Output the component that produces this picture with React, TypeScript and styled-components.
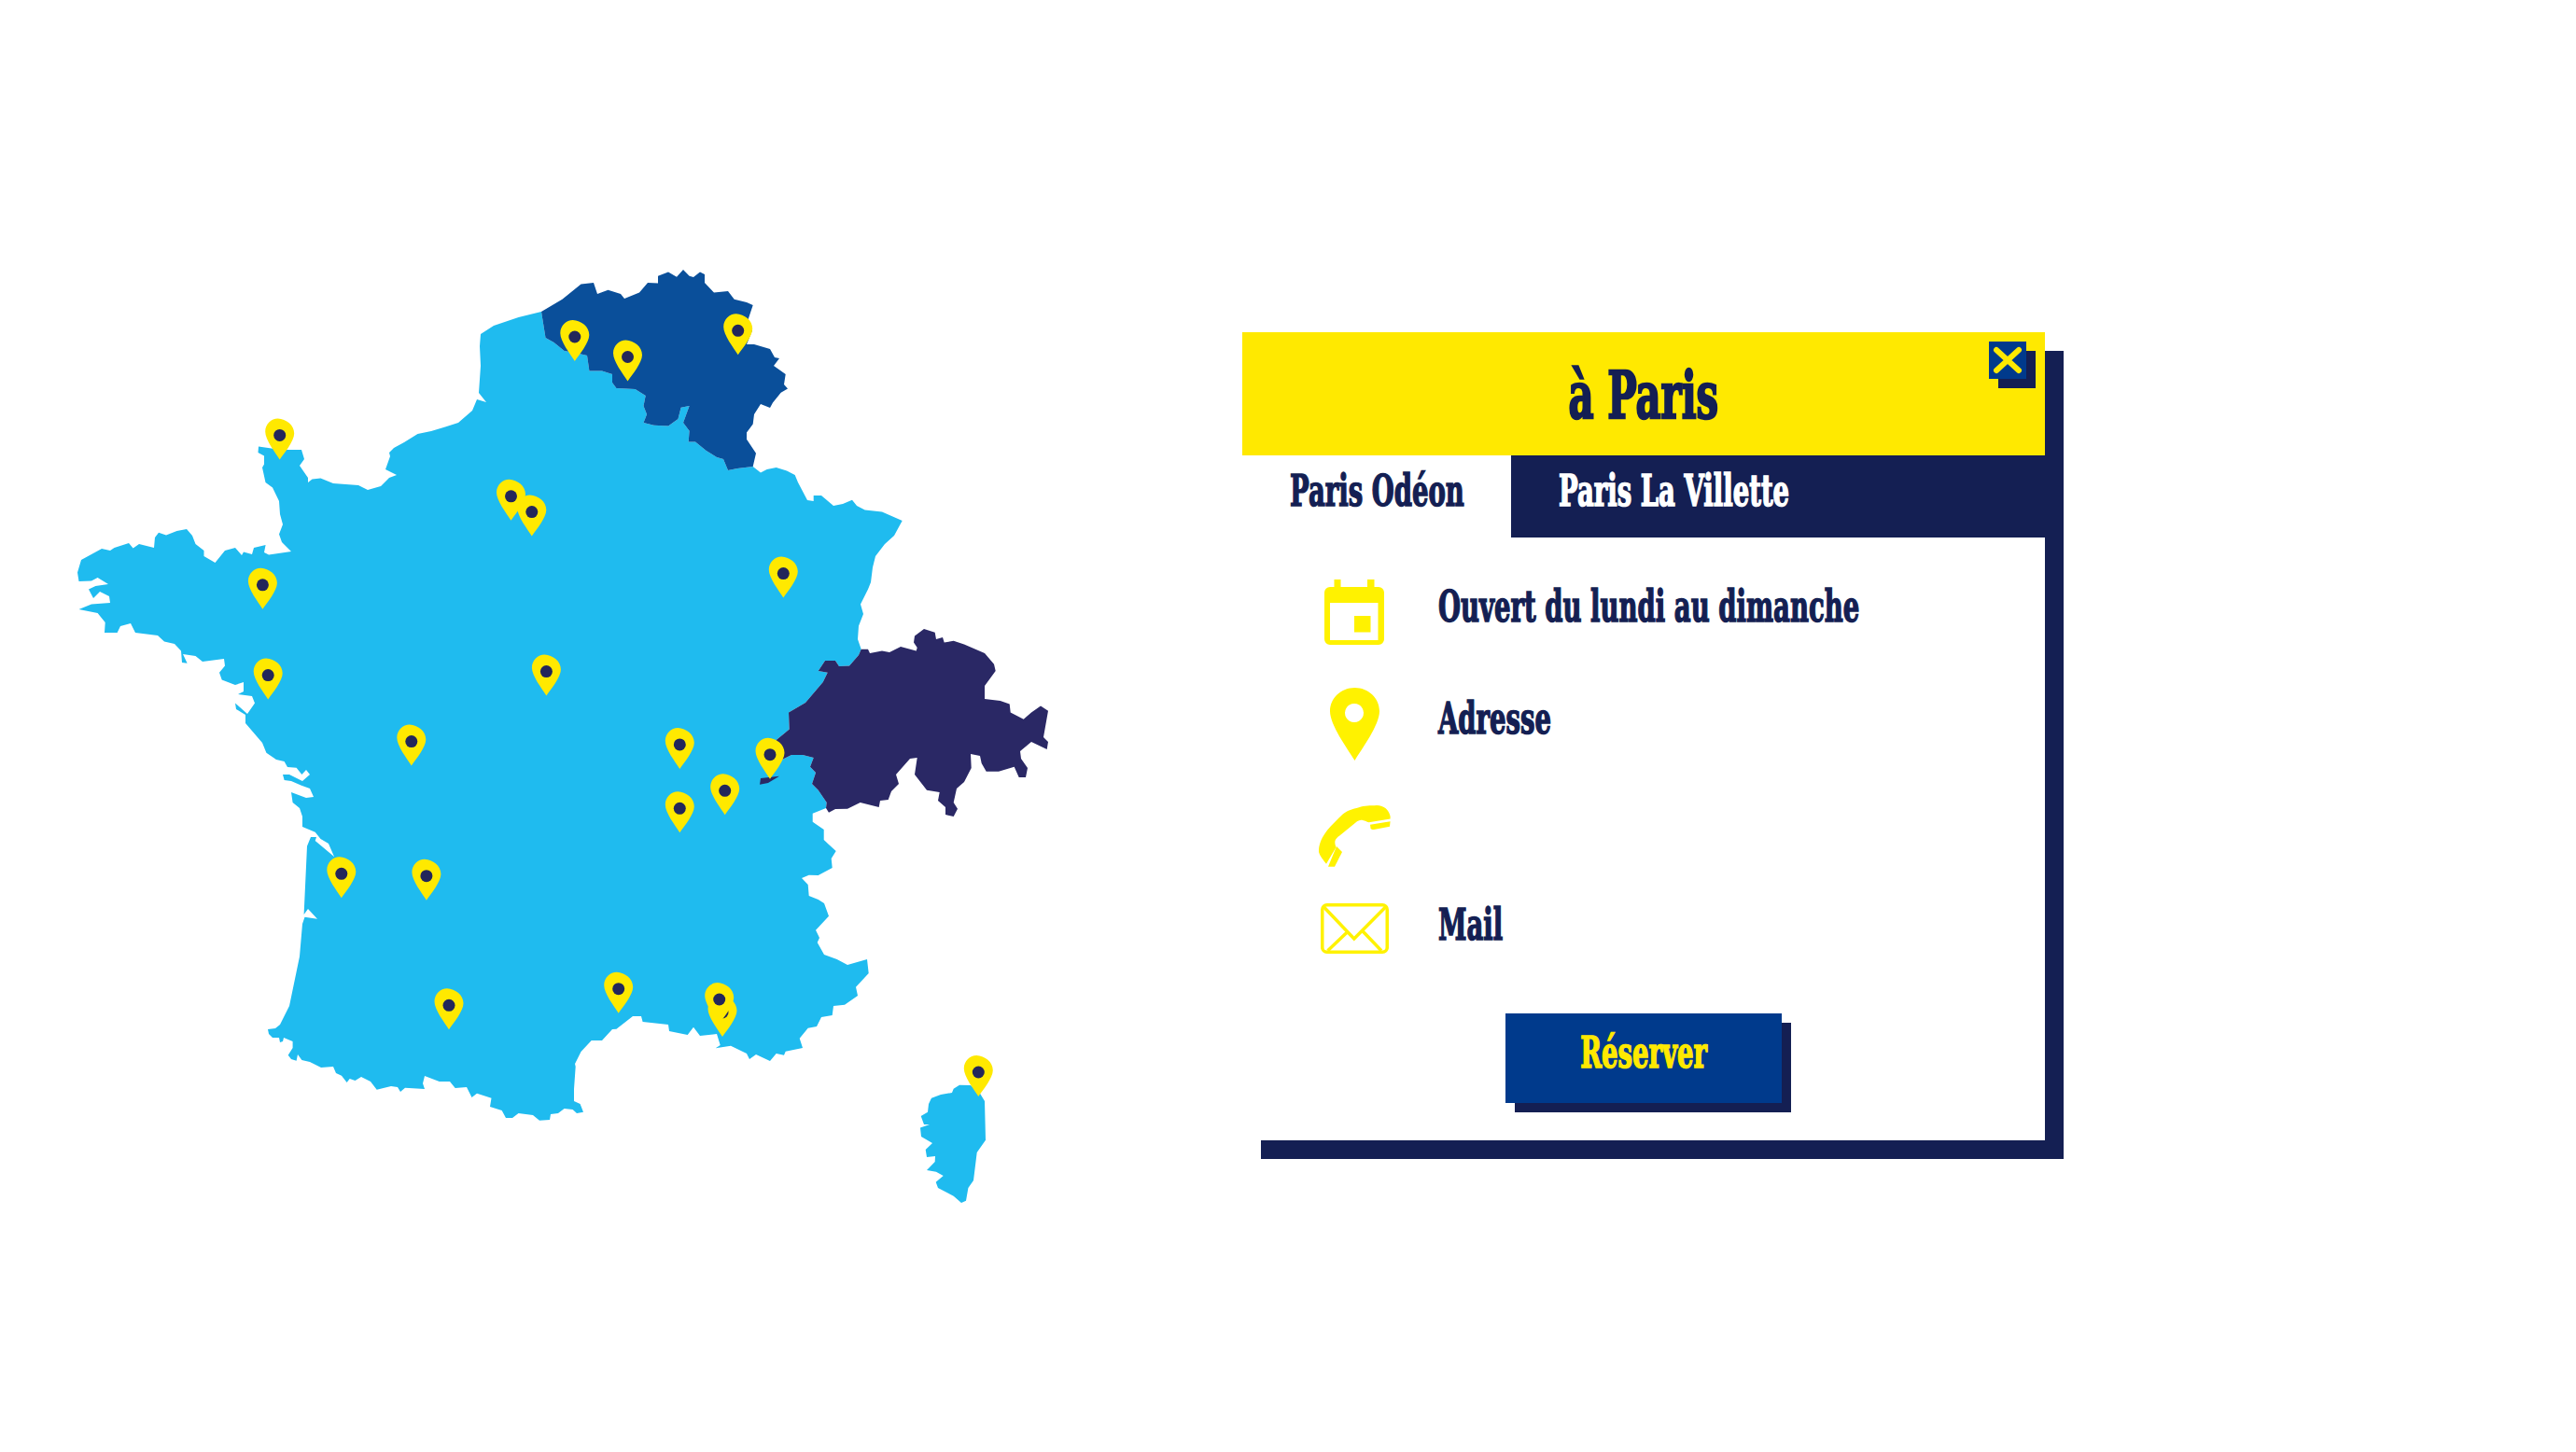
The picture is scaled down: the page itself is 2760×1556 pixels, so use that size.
import * as React from 'react'

import styled, { createGlobalStyle } from 'styled-components'

const navy = '#141f53'
const yellow = '#ffe900'
const iconYellow = '#fff200'

const GlobalStyle = createGlobalStyle`
  html, body {
    margin: 0;
    background: #fff;
    overflow: hidden;
  }
`

const Page = styled.div`
  display: flex;
  align-items: flex-start;
  width: 2760px;
  height: 1556px;
  font-family: 'DejaVu Serif Condensed', 'DejaVu Serif', serif;
  font-stretch: condensed;
  font-weight: 700;
`

const MapDrawing = styled.svg`
  display: block;
  flex: none;
  width: 1331px;
  height: 1556px;
`

const Panel = styled.div`
  position: relative;
  flex: none;
  display: flex;
  flex-direction: column;
  width: 860px;
  height: 866px;
  margin-top: 356px;
  background: #fff;
  box-shadow: 20px 20px 0 ${navy};
`

const Header = styled.div`
  display: flex;
  justify-content: center;
  align-items: center;
  box-sizing: border-box;
  height: 132px;
  padding-top: 3px;
  background: ${yellow};
  color: ${navy};
`

const Title = styled.h1`
  margin: 0;
  font-size: 70px;
  line-height: 1;
  font-weight: 700;
  white-space: nowrap;
  -webkit-text-stroke: 2.5px currentColor;
  transform: scaleX(0.665);
`

const CloseButton = styled.button`
  position: absolute;
  top: 10px;
  right: 20px;
  display: flex;
  width: 40px;
  height: 40px;
  padding: 0;
  border: 0;
  background: #003a8c;
  box-shadow: 10px 10px 0 ${navy};
`

const Tabs = styled.div`
  display: flex;
  height: 88px;
`

const Tab = styled.div<{ $active: boolean }>`
  flex: ${props => (props.$active ? '0 0 288px' : '1')};
  min-width: 0;
  box-sizing: border-box;
  padding: 11px 0 0 51px;
  background: ${props => (props.$active ? '#fff' : navy)};
  color: ${props => (props.$active ? navy : '#fff')};
`

const Label = styled.span`
  display: inline-block;
  font-size: 46px;
  line-height: 54px;
  white-space: nowrap;
  -webkit-text-stroke: 1.5px currentColor;
  transform: scaleX(0.665);
  transform-origin: left center;
`

const Row = styled.div<{ $top: number }>`
  display: flex;
  align-items: flex-start;
  margin-top: ${props => props.$top}px;
  padding-left: 80px;
  color: ${navy};
`

const IconSlot = styled.div`
  display: flex;
  justify-content: center;
  flex: none;
  width: 80px;
  margin-right: 50px;

  svg {
    display: block;
  }
`

const RowText = styled(Label)<{ $offset: number }>`
  margin-top: ${props => props.$offset}px;
`

const Reserve = styled.button`
  display: flex;
  justify-content: center;
  box-sizing: border-box;
  align-self: center;
  width: 296px;
  height: 96px;
  margin-top: 64px;
  padding: 15px 0 0;
  border: 0;
  background: #003a8c;
  box-shadow: 10px 10px 0 ${navy};
  color: ${yellow};
  font-family: inherit;
  font-stretch: inherit;
  font-weight: 700;
`

const ReserveText = styled(Label)`
  transform-origin: center;
`

const france = `580,334 555.6,340 529,349 515,358 514,371 515,392 513,421 521,431 511,428 506,440 491,453 477,457.5 462,462
447.5,465 433,474 422,480 417,485 418,489 413,503 425,509 417,512 408,521 394,525 384,520 357,518 343.5,512.5 334.5,513.6 330,517
330,512 321,499 326,492 323,482 301,482 277,478.6 276.5,485 283,488.6 283,497.5 281,501 284.5,517 292,522.5 299,537 300,551 303,562
299,572.5 302,581 312,591 288,594.6 283,592 284.6,584 272,587 270,594 261,591.4 259,595 252,587 241,590 230.5,603 218.5,596 218.5,590
209.5,583 206,574 200,567 189.5,569 178,573.6 170,570.7 166,576 165,587 149,583 142.6,587.5 138,582 122.5,587 118,590 109,588 98,594
87,600 83,613.6 84.5,623 98,622.5 104.6,619 116,626 102.4,628 95,631.4 100,641 107,634 117,639 118,646 98,647.5 84.5,653 104.6,657
112.7,667 112,678 125.6,678 129,671 140,668 145,678 169,681 176,687.5 187,690 194,697.5 195,710 200.6,710.7 196,701 209.5,703 217,709
240,706 241,713.6 235,720.7 237.7,728.6 252,734 261,731 261,741 255,744 270,746 273,753.6 265,765 252,753.6 253,760 263,766 263,775
281,796 285.4,806.7 296,814 304.6,816 308,822 317.6,822.7 323.4,830 328,825 332,830 324,837 310,830 303,830 304.6,836 312,837 323,841.7
332,845 336,854 328,855 312,849 313.6,860 321,866 324,875 324,886 337.7,891.7 343.5,899 352,904 358,918 337.7,901 339,897 333,897 329,906.7
325.6,980 330,974 340,984.7 326.5,982.7 324,990 321,1025 310,1078 300,1098 295,1102 287,1103 288,1108 292,1112 299,1112 300,1117 303,1116
304,1112 313.6,1116 313.6,1123 308.7,1130.7 312,1135 317.6,1136.7 319,1130 323.4,1136 332,1138 344,1144 357,1143 360,1150 366,1152.7
371.6,1160 374.7,1156 380.5,1158 387,1154 397,1159 403.7,1167.7 419,1164 426,1165 429,1170 434,1165.7 455,1167 453,1161 455,1153 470.7,1159
482,1159 487.7,1166 500,1165 505.5,1176 511,1171.7 526.5,1176.7 525,1186 537.7,1190 542,1198 549,1198 555.5,1193 571,1195 578,1200.7
589,1200 590,1194 598,1193 604.6,1188 613.6,1189 618,1193 625,1191.7 621.6,1183 615,1180 615,1167 616.7,1143 616,1140 622.5,1127 633.7,1115
645,1115 656,1103 660.4,1102.7 678,1089 687,1089 688.6,1095 716,1098 717,1105 736.7,1109 743,1100.7 750,1110 768,1108 771.7,1120 766.7,1123.3
783,1120.7 800,1129 803,1135 810,1130 825,1137 831.7,1129 840,1130.7 841.7,1126.7 860,1123 856.7,1112.7 865.7,1101.7 875,1100 880,1090
891.7,1088 893,1078 905,1076.7 919,1067 917,1057.7 930.7,1043 929,1028 908,1034 896.7,1028 883,1023 875.7,1010 878,1005 874,996.7 888,981.7
883,968 876.7,964 866.7,960 865.7,948 859,941 866.7,937.7 876.7,938 891.7,930 890.7,920 895.7,912 888,905 882.7,900 882.7,889 870.7,880.7
870.7,871.7 885,866 885.7,860 876.7,846.7 870,840 874,828 868,821.7 871.7,812 860,809 848,809 838,814 831.7,793 845.7,781.4 845,763.6 863,753
881.7,731 886.7,720.7 876.7,719 884,708 895,708 899,714 910,713.6 920,702 922.7,695.7 919,685 920,670.7 925,658 922,647.5 930,631.4 933,624
935,608 938,596 948,583 958,574 966.7,558 945,548.6 926.7,546.4 918,542 913,535.7 903,540 893,542 880,531 871.7,531 871.7,537 865,536 855,517
851.7,509 843,504.6 831.7,501 821.7,503 815,506.4 806.7,500 790,502 780,504 775,492 768,490 756.7,483 745,473.6 737.7,473.6 738.6,461.8 732,453
738.6,435 729.6,436.8 726.5,449 716,456.4 700.6,455.7 689.5,453 693,444 689.5,435 691.7,424 680.5,417 660.4,416 656,410 656,401 645,397.5
631.4,397.5 629,381 616,378 604.6,376 593.5,367 584.5,362`

const belgium = `580,334 602.4,320.7 622.5,304.6 636,303 640,315 651.5,310.7 665,315 669,320 685,313.6 694,303 705,303.6 705,295.7 716,291.4
725,296.8 732,289 738.6,295.7 743,297 750,291.4 755,294 755,303 765,313.6 780,312 786.7,320.7 800,324 806.7,327 801.7,342 806,354 800,369 808,369
825,374 830,383 835,384 829,392 841.7,401 840,412 844,416.4 836.7,420.7 828,431.4 825,437 815,433 808,444 806.7,454.6 800,463.6 800,470.7 810,485.7
806.7,500 790,502 780,504 775,492 768,490 756.7,483 745,473.6 737.7,473.6 738.6,461.8 732,453 738.6,435 729.6,436.8 726.5,449 716,456.4 700.6,455.7
689.5,453 693,444 689.5,435 691.7,424 680.5,417 660.4,416 656,410 656,401 645,397.5 631.4,397.5 629,381 616,378 604.6,376 593.5,367 584.5,362`

const swiss = `922.7,695.7 930,695.7 932,700 945,697.5 953,699 965,693 981.7,697.5 982.7,694 979,688.6 980,681.4 990,674 1001.7,677.8 1003,685 1010,683
1011.7,688.6 1021.7,686.8 1033,690.4 1055,700 1065,711.8 1066.7,719 1055,735 1055,749 1071.7,751 1081.7,754.6 1082.7,763.6 1096.7,770.7 1105,763.6
1115,756.4 1123,761.8 1118,790 1123,795 1121.7,803 1105,795 1093,805 1094,813 1101,823 1099,833 1091.7,833 1086.7,821.7 1070,826.7 1056.7,826.7
1051.7,818 1050,810 1040,808 1040.7,823 1033,838 1025,845 1021.7,860 1026,866.7 1021.7,875 1013,873 1013,865 1005,858 1006.7,849 993,846.7 980,830
982.7,812 975,813 960,830 963,840 955,848 951.7,857 943,858 941.7,865 921.7,860 908,866.7 895,867 888,870.7 885,866 885.7,860 876.7,846.7 870,840
874,828 868,821.7 871.7,812 860,809 848,809 838,814 831.7,793 845.7,781.4 845,763.6 863,753 881.7,731 886.7,720.7 876.7,719 884,708 895,708 899,714
910,713.6 920,702`

const lake = '835,831.7 815,834 814,840.7 823,839'

const corsica = `1040,1163 1028,1162.7 1021.7,1166.7 1020,1171 1008,1173 998,1176.7 995,1183 994,1191.7 986.7,1196 990,1205 996,1205 986,1208.4 987,1218
999,1225 991.7,1232 993,1240 1002,1239 1001.7,1245 993,1254 1003,1255.7 1010.7,1260 1002.7,1266.7 1005,1273 1021.7,1281.7 1030,1289 1035,1286.7
1037.4,1273 1043,1265 1046.7,1235 1056,1221.7 1055,1180 1050,1171.7`

// dot centre of every pin, in the order they stack
const pins = [
  [774, 1085], [615.8, 361], [672.5, 382.5], [299.7, 466.4], [547.5, 531.8], [569.8, 548.6], [281.4, 626.8],
  [287.2, 723.6], [585.4, 719.6], [440.8, 794.6], [728.3, 797.9], [728.3, 866.3], [365.8, 936.3], [456.9, 938.7],
  [481, 1077.3], [662.7, 1059.7], [790.7, 354.3], [839.3, 614.6], [825, 808.7], [776.7, 847.3], [770.7, 1071],
  [1048.3, 1149],
]

const pinPath = 'M0 26C-5 18-15.5 5-15.5-4C-15.5-12-9-18-2-18C7-17.5 15.5-11 15.5-2C15.5 6 5 19 0 26Z'

const CalendarIcon = () => (
  <svg width="64" height="70" viewBox="0 0 64 70">
    <path
      fill={iconYellow}
      fillRule="evenodd"
      d="M10.5 0h7v8h28.500V0h7.500v8H58a6 6 0 0 1 6 6v50a6 6 0 0 1-6 6H6a6 6 0 0 1-6-6V14a6 6 0 0 1 6-6h4.500zM6 25v40h51.500V25zM32 39h17.500v17.500H32z"
    />
  </svg>
)

const PinIcon = () => (
  <svg width="53" height="78" viewBox="0 0 53 78">
    <path
      fill={iconYellow}
      fillRule="evenodd"
      d="M26.500 78C18 64 0 40 0 25C0 11 12 0 26.500 0S53 11 53 25C53 40 35 64 26.500 78ZM26 17a10 10 0 1 0 .01 0Z"
    />
  </svg>
)

const PhoneIcon = () => (
  <svg width="77" height="66" viewBox="0 0 77 66">
    <g fill={iconYellow}>
      <path d="M76.600 11.700C75 5 70 0 62 0C55 .5 49 0 43 2.300C36 4 31 5.500 26 9.300C20 15 14 21 9 26.700C5 32 2 37 1 41.700C0 45 0 47 0 50C1 54 5 59 8 62.700L18.500 45C17.500 42 17 40 17.500 38C18 36 20 34 22 32.700L41 17.300C43 16 45 15.500 47 16C50 16.500 51 17.500 53.600 18.300L76.600 14.500Z" />
      <path d="M55 20.700L76.600 17.300L76 22.700L59 26C57 26 56 25.500 55.600 25Z" />
      <path d="M19 44L25 50L17 65.700H10Z" />
    </g>
  </svg>
)

const MailIcon = () => (
  <svg width="73" height="54" viewBox="0 0 73 54">
    <g fill="none" stroke={iconYellow} strokeWidth="3.500">
      <rect x="1.750" y="1.750" width="69.500" height="50.500" rx="5" />
      <path d="M2.500 3L35.800 38L70.500 3M28.600 30.700L7.600 50.700M44.200 29L65 50.700" />
    </g>
  </svg>
)

export default function App() {
  return (
    <Page>
      <GlobalStyle />
      <MapDrawing viewBox="0 0 1331 1556">
        <polygon fill="#1fbbef" points={france} />
        <polygon fill="#1fbbef" points={corsica} />
        <polygon fill="#0a4f9a" points={belgium} />
        <polygon fill="#2a2865" points={swiss} />
        <polygon fill="#2a2865" points={lake} />
        {pins.map(([x, y], index) => (
          <g key={index} transform={`translate(${x} ${y})`}>
            <path fill={yellow} d={pinPath} />
            <circle fill="#23265a" r="6.500" />
          </g>
        ))}
      </MapDrawing>
      <Panel>
        <Header>
          <Title>à Paris</Title>
        </Header>
        <CloseButton type="button" aria-label="Fermer">
          <svg width="40" height="40" viewBox="0 0 40 40">
            <path d="M8 9L32 31M32 9L8 31" fill="none" stroke={yellow} strokeWidth="6" strokeLinecap="round" />
          </svg>
        </CloseButton>
        <Tabs>
          <Tab $active>
            <Label>Paris Odéon</Label>
          </Tab>
          <Tab $active={false}>
            <Label>Paris La Villette</Label>
          </Tab>
        </Tabs>
        <Row $top={45}>
          <IconSlot><CalendarIcon /></IconSlot>
          <RowText $offset={2}>Ouvert du lundi au dimanche</RowText>
        </Row>
        <Row $top={46}>
          <IconSlot><PinIcon /></IconSlot>
          <RowText $offset={6}>Adresse</RowText>
        </Row>
        <Row $top={48}>
          <IconSlot><PhoneIcon /></IconSlot>
        </Row>
        <Row $top={39}>
          <IconSlot><MailIcon /></IconSlot>
          <RowText $offset={-4}>Mail</RowText>
        </Row>
        <Reserve type="button">
          <ReserveText>Réserver</ReserveText>
        </Reserve>
      </Panel>
    </Page>
  )
}
